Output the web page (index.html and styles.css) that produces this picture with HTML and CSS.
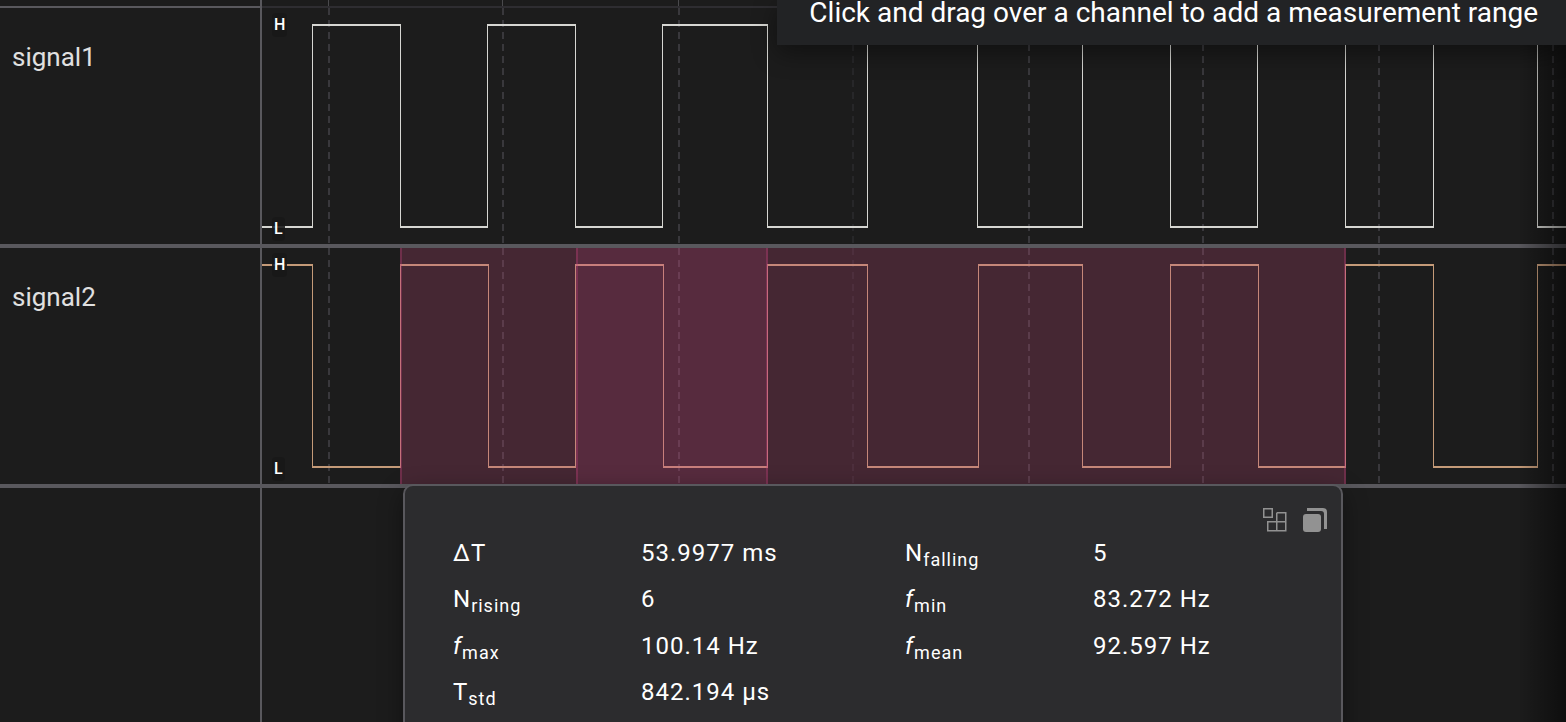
FILE: index.html
```html
<!DOCTYPE html>
<html lang="en">
<head>
<meta charset="utf-8">
<title>Logic analyzer</title>
<link rel="stylesheet" href="styles.css">
</head>
<body>
<main class="analyzer">
  <header class="row ruler">
    <div class="label"></div>
    <div class="plot">
      <svg class="wave" aria-hidden="true">
        <g transform="translate(-262)">
          <path class="tick" d="M328.5 0V6M502.5 0V6M678.5 0V6M852.5 0V6M1028.5 0V6M1202.5 0V6M1378.5 0V6M1552.5 0V6"/>
        </g>
      </svg>
    </div>
  </header>

  <section class="row channel">
    <h2 class="label">signal1</h2>
    <div class="plot">
      <svg class="wave" role="img" aria-label="signal1 waveform">
        <g transform="translate(-262)">
          <path class="grid" d="M329 0V236M503 0V236M679 0V236M1029 0V236M1203 0V236M1379 0V236M1553 0V236"/>
          <path class="grid faint" d="M853 0V236"/>
          <g class="trace-white">
            <path class="level" d="M262 219H313M400 219H488M575 219H663M767 219H868M977 219H1083M1170 219H1258M1345 219H1434M1537 219H4000M312 17H401M487 17H576M662 17H768M867 17H978M1082 17H1171M1257 17H1346M1433 17H1538"/>
            <path class="edge" d="M312.5 16V220M400.5 16V220M487.5 16V220M575.5 16V220M662.5 16V220M767.5 16V220M867.5 16V220M977.5 16V220M1082.5 16V220M1170.5 16V220M1257.5 16V220M1345.5 16V220M1433.5 16V220M1537.5 16V220"/>
          </g>
        </g>
      </svg>
      <span class="mark mark-high">H</span>
      <span class="mark mark-low">L</span>
    </div>
  </section>

  <section class="row channel">
    <h2 class="label">signal2</h2>
    <div class="plot">
      <svg class="wave" role="img" aria-label="signal2 waveform">
        <g transform="translate(-262)">
          <path class="grid" d="M329 0V236M503 0V236M679 0V236M1029 0V236M1203 0V236M1379 0V236M1553 0V236"/>
          <path class="grid faint" d="M853 0V236"/>
          <g class="trace-orange">
            <path class="level" d="M262 17H313M400 17H489M575 17H664M767 17H868M978 17H1083M1170 17H1259M1345 17H1434M1537 17H4000M312 219H401M488 219H576M663 219H768M867 219H979M1082 219H1171M1258 219H1346M1433 219H1538"/>
            <path class="edge" d="M312.5 16V220M400.5 16V220M488.5 16V220M575.5 16V220M663.5 16V220M767.5 16V220M867.5 16V220M978.5 16V220M1082.5 16V220M1170.5 16V220M1258.5 16V220M1345.5 16V220M1433.5 16V220M1537.5 16V220"/>
          </g>
          <rect class="range" x="400" width="946" height="236"/>
          <path class="range-edge" d="M401 0V236M1345 0V236"/>
          <rect class="range-inner" x="576" width="192" height="236"/>
          <path class="range-edge" d="M577 0V236M767 0V236"/>
        </g>
      </svg>
      <span class="mark mark-high">H</span>
      <span class="mark mark-low">L</span>
    </div>
  </section>

  <section class="row rest">
    <div class="label"></div>
    <div class="plot"></div>
  </section>

  <div class="fade"></div>

  <aside class="panel" aria-label="Measurements">
    <div class="actions">
      <button class="action" type="button" aria-label="Choose measurements">
        <svg width="26" height="26" viewBox="0 0 26 26" fill="none" stroke="#929292" stroke-width="1.5">
          <path d="M1.75 1.75h8.5v8.5h-8.5zM14.75 5.75h9v18h-18v-9h18M14.75 5.75v18"/>
        </svg>
      </button>
      <button class="action" type="button" aria-label="Copy measurements">
        <svg width="26" height="26" viewBox="0 0 26 26" fill="#929292">
          <rect x="1" y="7" width="18" height="18" rx="3"/>
          <path d="M5 1h16q4 0 4 4v17h-3V7q0-3-3-3H5z"/>
        </svg>
      </button>
    </div>
    <dl class="values">
      <dt>ΔT</dt><dd>53.9977 ms</dd>
      <dt>N<sub>falling</sub></dt><dd>5</dd>
      <dt>N<sub>rising</sub></dt><dd>6</dd>
      <dt><i>f</i><sub>min</sub></dt><dd>83.272 Hz</dd>
      <dt><i>f</i><sub>max</sub></dt><dd>100.14 Hz</dd>
      <dt><i>f</i><sub>mean</sub></dt><dd>92.597 Hz</dd>
      <dt>T<sub>std</sub></dt><dd>842.194 µs</dd>
    </dl>
  </aside>

  <div class="hint" role="status">Click and drag over a channel to add a measurement range</div>
</main>
</body>
</html>
```
FILE: styles.css
```css
* {
  box-sizing: border-box;
}

body {
  margin: 0;
  overflow: hidden;
  background: #1c1c1c;
  color: #fff;
  font-family: Roboto, "Noto Sans", sans-serif;
}

.analyzer {
  position: relative;
  display: flex;
  flex-direction: column;
  height: 100vh;
  overflow: hidden;
}

.row {
  display: grid;
  grid-template-columns: 262px minmax(0, 1fr);
  flex: none;
}

.channel {
  height: 240px;
  border-bottom: 4px solid #59585d;
}

.rest {
  flex: 1;
}

.label {
  margin: 0;
  padding: 34px 12px 0;
  border-right: 2px solid #59585d;
  color: #e0e0e0;
  font-size: 26px;
  font-weight: 400;
  line-height: 30px;
}

.plot {
  position: relative;
  overflow: hidden;
}

.ruler {
  height: 8px;
}

.ruler .label {
  padding: 0;
  border-bottom: 2px solid #59585d;
}

.ruler .plot {
  border-bottom: 2px solid #2e2d31;
}

.wave {
  display: block;
  width: 100%;
  height: 100%;
}

.tick {
  stroke: #4a4a4d;
}

.grid {
  fill: none;
  stroke: #39383c;
  stroke-width: 2;
  stroke-dasharray: 7 5;
}

.faint {
  stroke: #272729;
}

.level {
  stroke-width: 2;
}

.trace-white {
  stroke: #d6d6d2;
}

.trace-orange {
  stroke: #c49a78;
}

.range {
  fill: rgb(199 74 124 / 24%);
}

.range-inner {
  fill: rgb(219 72 151 / 12%);
}

.range-edge {
  stroke: rgb(200 64 124 / 32%);
  stroke-width: 2;
}

.mark {
  position: absolute;
  left: 10px;
  padding: 0 2px;
  border-radius: 4px;
  background: rgb(24 24 24 / 88%);
  font-size: 16px;
  font-weight: 500;
  line-height: 24px;
}

.mark-high {
  top: 5px;
}

.mark-low {
  top: 209px;
}

.fade {
  position: absolute;
  top: 0;
  right: 0;
  bottom: 0;
  width: 48px;
  background: linear-gradient(to right, transparent, rgb(0 0 0 / 50%));
}

.panel {
  position: absolute;
  top: 484px;
  left: 403px;
  width: 940px;
  padding: 21px 13px 24px 48px;
  border: 2px solid #59585d;
  border-radius: 10px;
  background: #2c2c2e;
  box-shadow: 0 8px 24px rgb(0 0 0 / 40%);
}

.actions {
  display: flex;
  justify-content: flex-end;
  gap: 14px;
}

.action {
  display: block;
  padding: 0;
  border: 0;
  background: none;
}

.action svg {
  display: block;
}

.values {
  display: grid;
  grid-template-columns: 188px 264px 188px 1fr;
  grid-template-rows: repeat(2, 46px 47px);
  margin: 0;
  font-size: 24px;
  letter-spacing: 1px;
  line-height: 40px;
}

.values dd {
  margin: 0;
}

.values sub {
  position: relative;
  top: 5px;
  font-size: 18px;
  line-height: 0;
  vertical-align: baseline;
}

.hint {
  position: absolute;
  top: 0;
  right: 0;
  padding: 0 28px 19px 32px;
  background: #222325;
  box-shadow: 0 8px 24px rgb(0 0 0 / 40%);
  font-size: 28px;
  line-height: 26px;
  white-space: nowrap;
}
```
